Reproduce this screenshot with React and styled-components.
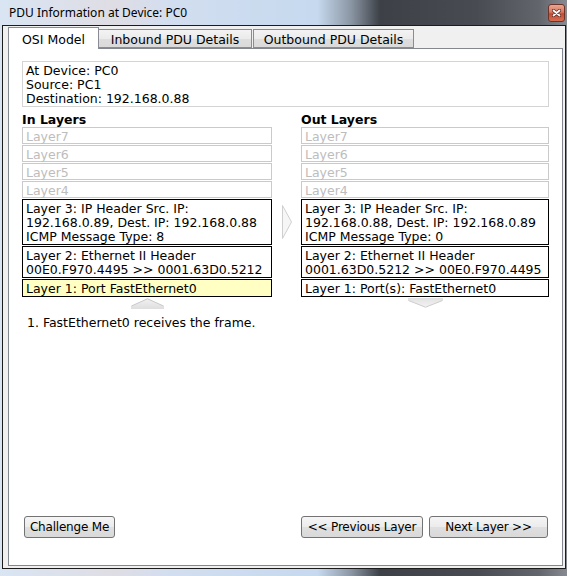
import React from "react";
import styled, { createGlobalStyle } from "styled-components";

const GlobalStyle = createGlobalStyle`
  html, body {
    margin: 0;
    padding: 0;
  }
  body {
    font-family: "DejaVu Sans", Verdana, sans-serif;
    font-size: 12.5px;
    color: #000;
  }
`;

const Window = styled.div`
  width: 567px;
  height: 576px;
  display: flex;
  flex-direction: column;
  overflow: hidden;
  background: linear-gradient(
    90deg,
    #d9e5f3 0%,
    #dfdde4 20%,
    #d2def0 30%,
    #c6d9ee 56%,
    #8a95a3 62%,
    #3d4147 67%,
    #484c52 84%,
    #62666c 95%,
    #878b91 100%
  );
`;

const TitleBar = styled.div`
  flex: none;
  height: 25px;
  box-sizing: border-box;
  display: flex;
  align-items: center;
  justify-content: space-between;
  padding: 0 2px 0 9px;
`;

const Title = styled.span`
  font-family: "Noto Sans", "DejaVu Sans", sans-serif;
  font-size: 12px;
  color: #000;
`;

const CloseButton = styled.div`
  width: 17px;
  height: 18px;
  box-sizing: border-box;
  border: 1px solid #6e3328;
  border-radius: 3px;
  background: linear-gradient(#e9a590, #d8765f 45%, #c44a32 55%, #d56f52);
  display: flex;
  align-items: center;
  justify-content: center;
`;

const Client = styled.div`
  flex: none;
  height: 544px;
  margin: 0 1px 0 2px;
  box-sizing: border-box;
  border: 1px solid #1c1c1c;
  background: #f0f0f0;
  display: flex;
  flex-direction: column;
  padding: 0 2px 2px 5px;
`;

const TabBar = styled.div`
  flex: none;
  height: 22px;
  display: flex;
  align-items: flex-end;
`;

const Tab = styled.div`
  box-sizing: border-box;
  width: ${(p) => p.$width}px;
  height: ${(p) => (p.$active ? 22 : 19)}px;
  margin-left: ${(p) => p.$offset || 0}px;
  margin-bottom: ${(p) => (p.$active ? -1 : 0)}px;
  padding-top: ${(p) => (p.$active ? 3 : 1)}px;
  position: relative;
  z-index: ${(p) => (p.$active ? 1 : 0)};
  border: 1px solid #898c95;
  border-bottom: ${(p) => (p.$active ? "none" : "1px solid #898c95")};
  background: ${(p) =>
    p.$active ? "#fff" : "linear-gradient(#f3f3f3, #ebebeb 50%, #dedede 51%, #dadada)"};
  line-height: 17px;
  text-align: center;
  white-space: nowrap;
`;

const Panel = styled.div`
  flex: 1;
  background: #fff;
  border: 1px solid #828790;
  padding: 12px 13px 27px;
  display: flex;
  flex-direction: column;
`;

const InfoBox = styled.div`
  border: 1px solid #d4d4d4;
  padding: 2px 3px 0;
  line-height: 14px;
`;

const LayersGrid = styled.div`
  display: grid;
  grid-template-columns: 250px 29px 248px;
`;

const Column = styled.div`
  display: flex;
  flex-direction: column;
`;

const Heading = styled.div`
  box-sizing: border-box;
  height: 20px;
  padding-top: 5px;
  line-height: 16px;
  font-weight: bold;
`;

const LayerBox = styled.div`
  border: 1px solid ${(p) => (p.$inactive ? "#cacaca" : "#000")};
  color: ${(p) => (p.$inactive ? "#bdbdbd" : "#000")};
  background: ${(p) => (p.$current ? "#ffffc4" : "#fff")};
  padding: 2px 3px 0;
  margin-bottom: 1px;
  line-height: ${(p) => (p.$inactive ? 13 : 14)}px;
  white-space: nowrap;
`;

const ArrowSlot = styled.div`
  height: 11px;
  display: flex;
  justify-content: center;
`;

const Middle = styled.div`
  padding-top: 98px;
  display: flex;
  justify-content: center;
  align-items: flex-start;
`;

const Message = styled.div`
  margin-top: 7px;
  padding-left: 5px;
  line-height: 14px;
`;

const ButtonRow = styled.div`
  margin-top: auto;
  display: flex;
  justify-content: space-between;
  padding: 0 1px 0 2px;
`;

const ButtonGroup = styled.div`
  display: flex;
  gap: 6px;
`;

const Button = styled.button`
  box-sizing: border-box;
  width: ${(p) => p.$width}px;
  height: 22px;
  padding: 0;
  border: 1px solid #737373;
  border-radius: 3px;
  background: linear-gradient(#f5f5f5, #ececec 48%, #dfdfdf 52%, #d9d9d9);
  font-family: "DejaVu Sans", Verdana, sans-serif;
  font-size: 12px;
  letter-spacing: -0.2px;
  color: #000;
  white-space: nowrap;
`;

const inLayers = [
  { lines: ["Layer7"], inactive: true },
  { lines: ["Layer6"], inactive: true },
  { lines: ["Layer5"], inactive: true },
  { lines: ["Layer4"], inactive: true },
  {
    lines: [
      "Layer 3: IP Header Src. IP:",
      "192.168.0.89, Dest. IP: 192.168.0.88",
      "ICMP Message Type: 8",
    ],
  },
  { lines: ["Layer 2: Ethernet II Header", "00E0.F970.4495 >> 0001.63D0.5212"] },
  { lines: ["Layer 1: Port FastEthernet0"], current: true },
];

const outLayers = [
  { lines: ["Layer7"], inactive: true },
  { lines: ["Layer6"], inactive: true },
  { lines: ["Layer5"], inactive: true },
  { lines: ["Layer4"], inactive: true },
  {
    lines: [
      "Layer 3: IP Header Src. IP:",
      "192.168.0.88, Dest. IP: 192.168.0.89",
      "ICMP Message Type: 0",
    ],
  },
  { lines: ["Layer 2: Ethernet II Header", "0001.63D0.5212 >> 00E0.F970.4495"] },
  { lines: ["Layer 1: Port(s): FastEthernet0"] },
];

function CloseIcon() {
  return (
    <svg width="9" height="8" viewBox="0 0 9 8">
      <path d="M1.5 1.5 L7.5 6.5 M7.5 1.5 L1.5 6.5" stroke="#5a2a22" strokeWidth="3.2" strokeLinecap="round" />
      <path d="M1.5 1.5 L7.5 6.5 M7.5 1.5 L1.5 6.5" stroke="#fff" strokeWidth="1.8" strokeLinecap="round" />
    </svg>
  );
}

function RightChevron() {
  return (
    <svg width="10" height="34" viewBox="0 0 10 34">
      <polygon points="0.5,0.5 9.5,17 0.5,33.5" fill="#f6f6f6" stroke="#cfcfcf" />
    </svg>
  );
}

function UpArrow() {
  return (
    <svg width="33" height="11" viewBox="0 0 33 11">
      <defs>
        <linearGradient id="upfill" x1="0" y1="0" x2="0" y2="1">
          <stop offset="0" stopColor="#f2f2f2" />
          <stop offset="1" stopColor="#dedede" />
        </linearGradient>
      </defs>
      <polygon points="0,11 0,8 16.5,0.5 33,8 33,11" fill="url(#upfill)" />
      <polyline points="0.5,8 16.5,0.8 32.5,8" fill="none" stroke="#c9c9c9" />
    </svg>
  );
}

function DownArrow() {
  return (
    <svg width="35" height="10" viewBox="0 0 35 10">
      <defs>
        <linearGradient id="downfill" x1="0" y1="0" x2="0" y2="1">
          <stop offset="0" stopColor="#e2e2e2" />
          <stop offset="1" stopColor="#f4f4f4" />
        </linearGradient>
      </defs>
      <polygon points="0,0 35,0 35,2.5 17.5,9.5 0,2.5" fill="url(#downfill)" />
      <polyline points="0.5,2.5 17.5,9.2 34.5,2.5" fill="none" stroke="#cdcdcd" />
    </svg>
  );
}

function LayerStack({ layers }) {
  return layers.map((layer, i) => (
    <LayerBox key={i} $inactive={layer.inactive} $current={layer.current}>
      {layer.lines.map((line, j) => (
        <div key={j}>{line}</div>
      ))}
    </LayerBox>
  ));
}

export default function App() {
  return (
    <>
      <GlobalStyle />
      <Window>
        <TitleBar>
          <Title>PDU Information at Device: PC0</Title>
          <CloseButton>
            <CloseIcon />
          </CloseButton>
        </TitleBar>
        <Client>
          <TabBar>
            <Tab $active $width={91}>OSI Model</Tab>
            <Tab $width={154} $offset={-1}>Inbound PDU Details</Tab>
            <Tab $width={161} $offset={1}>Outbound PDU Details</Tab>
          </TabBar>
          <Panel>
            <InfoBox>
              <div>At Device: PC0</div>
              <div>Source: PC1</div>
              <div>Destination: 192.168.0.88</div>
            </InfoBox>
            <LayersGrid>
              <Column>
                <Heading>In Layers</Heading>
                <LayerStack layers={inLayers} />
                <ArrowSlot>
                  <UpArrow />
                </ArrowSlot>
              </Column>
              <Middle>
                <RightChevron />
              </Middle>
              <Column>
                <Heading>Out Layers</Heading>
                <LayerStack layers={outLayers} />
                <ArrowSlot>
                  <DownArrow />
                </ArrowSlot>
              </Column>
            </LayersGrid>
            <Message>1. FastEthernet0 receives the frame.</Message>
            <ButtonRow>
              <Button $width={91}>Challenge Me</Button>
              <ButtonGroup>
                <Button $width={122}>&lt;&lt; Previous Layer</Button>
                <Button $width={119}>Next Layer &gt;&gt;</Button>
              </ButtonGroup>
            </ButtonRow>
          </Panel>
        </Client>
      </Window>
    </>
  );
}
